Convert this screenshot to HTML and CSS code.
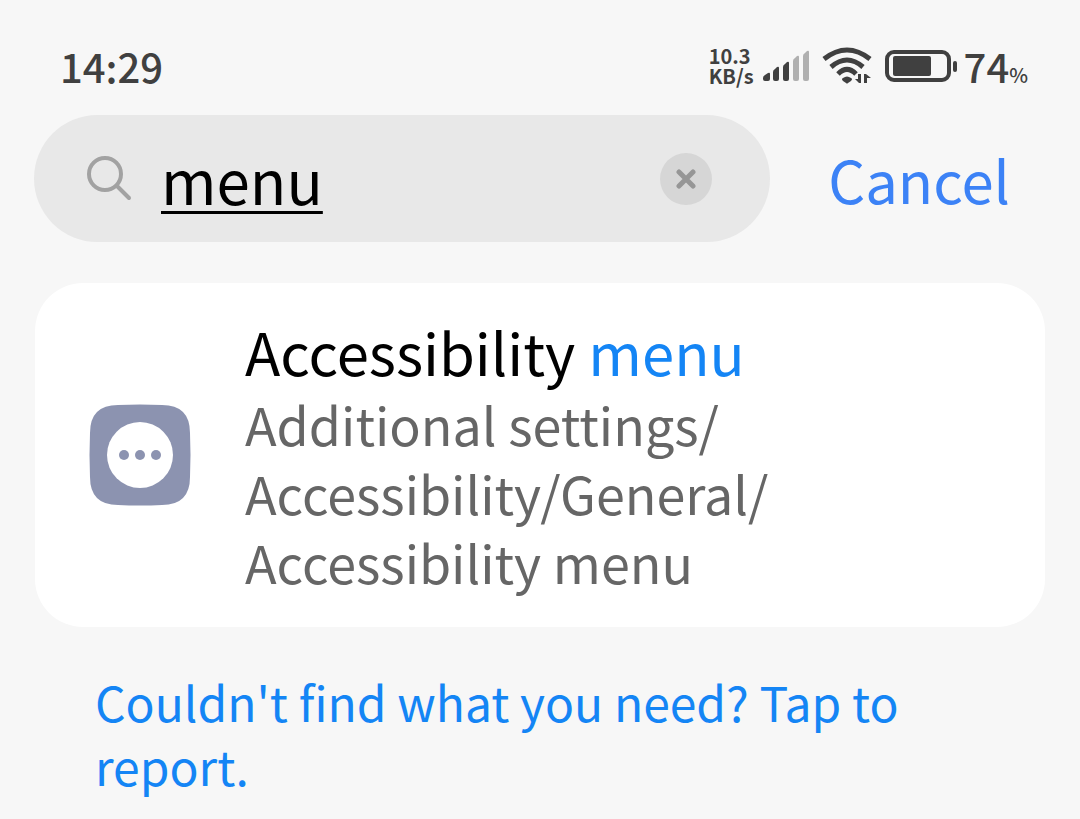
FILE: index.html
```html
<!DOCTYPE html>
<html lang="en">
    <head>
        <meta charset="utf-8" />
        <meta name="viewport" content="width=device-width, initial-scale=1" />
        <title>Search settings</title>
        <link rel="stylesheet" href="styles.css" />
    </head>
    <body>
        <header class="status-bar">
            <time class="clock">14:29</time>
            <div class="status-icons">
                <div class="net-speed"><span>10.3</span><span>KB/s</span></div>
                <svg class="signal" width="48" height="32" viewBox="0 0 48 32" aria-hidden="true">
                    <path d="M1 28q0-2 2-3l3-2q2-1 2 1v5q0 2-2 2H3q-2 0-2-2z" />
                    <path d="M11 22q0-2 2-3l2-2q2-1 2 1v11q0 2-2 2h-2q-2 0-2-2z" />
                    <path d="M21 17q0-2 2-3l2-2q2-1 2 1v16q0 2-2 2h-2q-2 0-2-2z" />
                    <path class="off" d="M31 11q0-2 2-3l2-2q2-1 2 1v22q0 2-2 2h-2q-2 0-2-2z" />
                    <path class="off" d="M41 6q0-2 2-3l2-2q2-1 2 1v27q0 2-2 2h-2q-2 0-2-2z" />
                </svg>
                <svg class="wifi" width="50" height="38" viewBox="0 0 50 38" aria-hidden="true">
                    <path class="arc" d="M2 12Q25-6 48 12" />
                    <path class="arc" d="M9 20Q25 6 41 20" />
                    <path class="arc" d="M16 27Q25 18 34 27" />
                    <path d="M21 31q4-3 8 0 2 1 0 3l-3 2q-1 1-2 0l-3-2q-2-2 0-3z" />
                    <path d="M39 27v9h-2l-4-4h3v-5zM42 36v-9h2l5 4h-4v5z" />
                </svg>
                <svg class="battery" width="74" height="34" viewBox="0 0 74 34" aria-hidden="true">
                    <rect class="case" x="3" y="3" width="62" height="28" rx="7" />
                    <rect x="9" y="7" width="38" height="20" rx="2" />
                    <rect x="69" y="12" width="4" height="11" rx="2" />
                </svg>
                <span class="level">74<small>%</small></span>
            </div>
        </header>

        <form class="search-row">
            <div class="search-box">
                <svg width="46" height="46" viewBox="0 0 46 46" aria-hidden="true">
                    <circle cx="18" cy="18" r="16" />
                    <path d="M30 30l12 12" />
                </svg>
                <input class="search-input" type="text" value="menu" aria-label="Search settings" />
                <button class="clear" type="button" aria-label="Clear">
                    <svg width="20" height="20" viewBox="0 0 20 20" aria-hidden="true">
                        <path d="M3 3l14 14M17 3L3 17" />
                    </svg>
                </button>
            </div>
            <button class="cancel" type="button">Cancel</button>
        </form>

        <main>
            <a class="result" href="#accessibility-menu">
                <svg class="result-icon" width="102" height="102" viewBox="0 0 102 102" aria-hidden="true">
                    <path class="tile" d="M29 1Q51 0 73 1Q101 1 101 29Q102 51 101 73Q101 101 73 101Q51 102 29 101Q1 101 1 73Q0 51 1 29Q1 1 29 1z" />
                    <circle class="disc" cx="51" cy="51" r="33" />
                    <circle cx="35" cy="51" r="5" />
                    <circle cx="51" cy="51" r="5" />
                    <circle cx="67" cy="51" r="5" />
                </svg>
                <div>
                    <h2 class="result-title">Accessibility <mark>menu</mark></h2>
                    <p class="result-path">Additional settings/<wbr />Accessibility/General/<wbr />Accessibility menu</p>
                </div>
            </a>
            <a class="report" href="#report">Couldn't find what you need? Tap to report.</a>
        </main>
    </body>
</html>
```

FILE: styles.css
```css
* {
    box-sizing: border-box;
}
body {
    margin: 0;
    background: #f7f7f7;
    color: #000;
    font-family: "Noto Sans CJK SC", "Noto Sans", sans-serif;
}
a {
    text-decoration: none;
}
button {
    border: none;
    padding: 0;
    font-family: inherit;
    cursor: pointer;
}

/* Status bar */
.status-bar {
    display: flex;
    justify-content: space-between;
    align-items: center;
    height: 115px;
    padding: 16px 52px 0 60px;
    color: #404040;
    fill: #404040;
}
.clock,
.level {
    font-size: 40px;
    font-weight: 500;
}
.level small {
    font-size: 20px;
}
.status-icons {
    display: flex;
    align-items: center;
}
.net-speed {
    display: flex;
    flex-direction: column;
    font-size: 20px;
    font-weight: 700;
    line-height: 20px;
}
.signal {
    margin-left: 8px;
}
.signal .off {
    fill: #b0b0b0;
}
.wifi {
    margin-left: 12px;
}
.wifi .arc {
    fill: none;
    stroke: #404040;
    stroke-width: 5;
}
.battery {
    margin: 0 6px 0 12px;
}
.battery .case {
    fill: none;
    stroke: #404040;
    stroke-width: 4;
}

/* Search */
.search-row {
    display: flex;
    align-items: center;
    padding: 0 70px 0 34px;
}
.search-box {
    display: flex;
    flex: 1;
    align-items: center;
    min-width: 0;
    height: 127px;
    padding: 0 58px 0 53px;
    border-radius: 64px;
    background: #e8e8e8;
}
.search-box svg {
    flex: none;
    fill: none;
    stroke: #a2a2a2;
    stroke-width: 4;
    stroke-linecap: round;
}
.search-input {
    flex: 1;
    min-width: 0;
    margin: 0 28px;
    padding: 0;
    border: none;
    outline: none;
    background: none;
    color: #000;
    font-family: inherit;
    font-size: 60px;
    text-decoration: underline;
    text-decoration-thickness: 3px;
    text-underline-offset: 6px;
}
.clear {
    display: flex;
    align-items: center;
    justify-content: center;
    width: 52px;
    height: 52px;
    border-radius: 50%;
    background: #d6d6d6;
}
.clear svg {
    stroke: #969696;
    stroke-width: 5;
}
.cancel {
    margin-left: 58px;
    background: none;
    color: #3c82f6;
    font-size: 58px;
}

/* Results */
main {
    padding: 41px 35px 0;
}
.result {
    display: flex;
    align-items: center;
    gap: 54px;
    padding: 31px 54px;
    border-radius: 48px;
    background: #fff;
    color: #000;
}
.result-icon {
    flex: none;
    fill: #8c93b0;
}
.result-icon .disc {
    fill: #fff;
}
.result-title {
    margin: 0;
    font-size: 58px;
    font-weight: 400;
    line-height: 75px;
}
.result-title mark {
    background: none;
    color: #1485f5;
}
.result-path {
    margin: 0;
    color: #666;
    font-size: 52px;
    line-height: 69px;
}
.report {
    display: block;
    padding: 42px 60px 24px;
    color: #1485f5;
    font-size: 48px;
    line-height: 64px;
}
```
